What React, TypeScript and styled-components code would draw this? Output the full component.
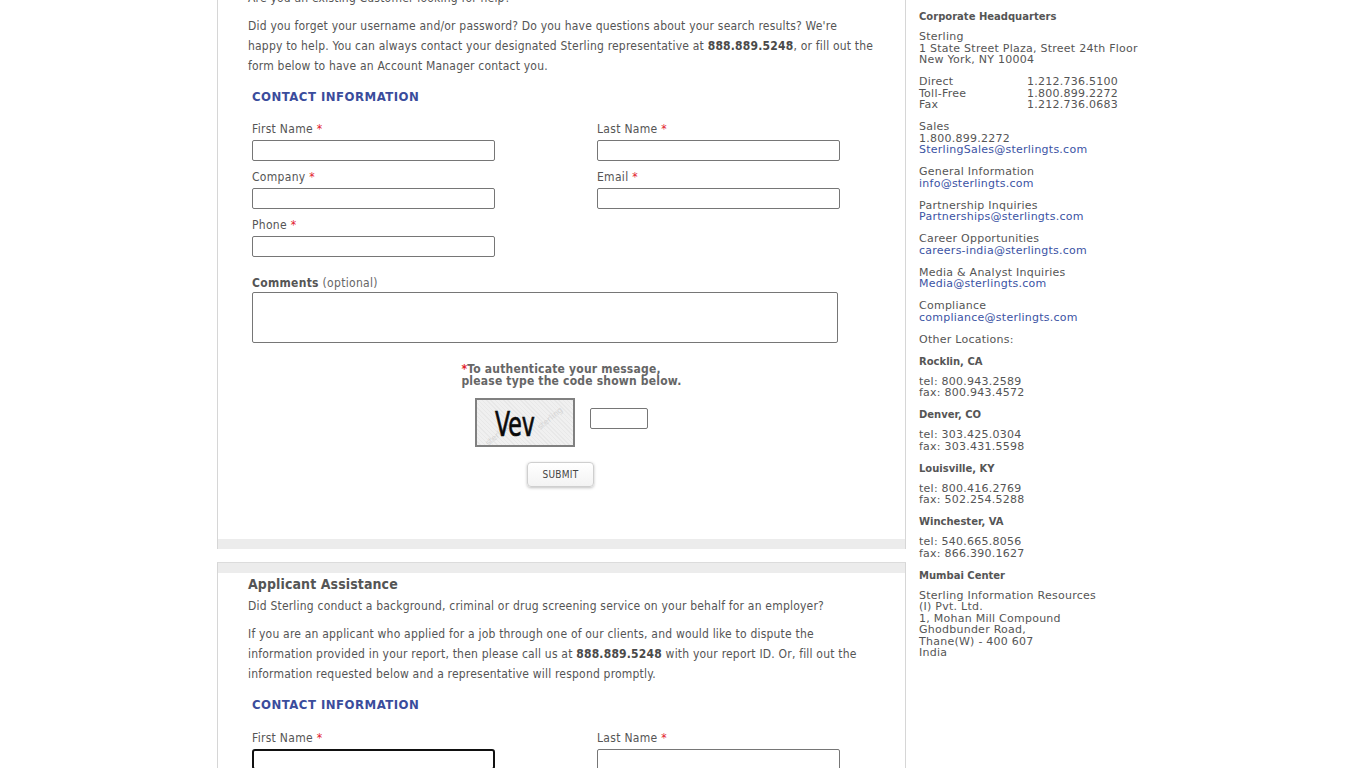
import React from "react";
import styled, { createGlobalStyle } from "styled-components";

const GlobalStyle = createGlobalStyle`
  html, body {
    margin: 0;
    padding: 0;
    background: #ffffff;
    overflow: hidden;
  }
  body {
    font-family: "DejaVu Sans Condensed", "DejaVu Sans", sans-serif;
    color: #555555;
  }
`;

interface FieldType {
  label: string;
  focused?: boolean;
}

const firstRows: FieldType[][] = [
  [{ label: "First Name" }, { label: "Last Name" }],
  [{ label: "Company" }, { label: "Email" }],
  [{ label: "Phone" }],
];

interface LocationType {
  city: string;
  lines: string[];
}

const locations: LocationType[] = [
  { city: "Rocklin, CA", lines: ["tel: 800.943.2589", "fax: 800.943.4572"] },
  { city: "Denver, CO", lines: ["tel: 303.425.0304", "fax: 303.431.5598"] },
  { city: "Louisville, KY", lines: ["tel: 800.416.2769", "fax: 502.254.5288"] },
  { city: "Winchester, VA", lines: ["tel: 540.665.8056", "fax: 866.390.1627"] },
  {
    city: "Mumbai Center",
    lines: [
      "Sterling Information Resources",
      "(I) Pvt. Ltd.",
      "1, Mohan Mill Compound",
      "Ghodbunder Road,",
      "Thane(W) - 400 607",
      "India",
    ],
  },
];

const contacts = [
  { title: "General Information", mail: "info@sterlingts.com" },
  { title: "Partnership Inquiries", mail: "Partnerships@sterlingts.com" },
  { title: "Career Opportunities", mail: "careers-india@sterlingts.com" },
  { title: "Media & Analyst Inquiries", mail: "Media@sterlingts.com" },
  { title: "Compliance", mail: "compliance@sterlingts.com" },
];

function Field({ label, focused }: FieldType) {
  return (
    <FieldBox>
      <Label>
        {label} <Req>*</Req>
      </Label>
      <TextInput $focused={focused} />
    </FieldBox>
  );
}

export default function App() {
  return (
    <>
      <GlobalStyle />
      <Page>
        <MainColumn>
          {/* 기존 고객 문의 */}
          <Panel>
            <PanelBody>
              <Para $first>Are you an existing Customer looking for help?</Para>
              <Para>
                Did you forget your username and/or password? Do you have questions about your search results? We're
                happy to help. You can always contact your designated Sterling representative at <b>888.889.5248</b>,
                or fill out the form below to have an Account Manager contact you.
              </Para>
              <FormBlock>
                <SectionTitle>CONTACT INFORMATION</SectionTitle>
                <FieldGrid>
                  {firstRows.flat().map((f) => (
                    <Field key={f.label} label={f.label} />
                  ))}
                </FieldGrid>
                <CommentLabel>
                  <b>Comments</b> (optional)
                </CommentLabel>
                <CommentBox />
                <Captcha>
                  <CaptchaText>
                    <Req>*</Req>To authenticate your message,
                    <br />
                    please type the code shown below.
                  </CaptchaText>
                  <CaptchaRow>
                    <CaptchaImage>
                      <Watermark style={{ left: 6, top: 30 }}>sterling</Watermark>
                      <Watermark style={{ left: 58, top: 14 }}>sterling</Watermark>
                      <CaptchaCode>Vev</CaptchaCode>
                    </CaptchaImage>
                    <CodeInput />
                  </CaptchaRow>
                  <SubmitButton>SUBMIT</SubmitButton>
                </Captcha>
              </FormBlock>
            </PanelBody>
            <PanelBand />
          </Panel>

          {/* 지원자 문의 */}
          <Panel $top>
            <PanelBand />
            <PanelBody>
              <PanelTitle>Applicant Assistance</PanelTitle>
              <Para>Did Sterling conduct a background, criminal or drug screening service on your behalf for an employer?</Para>
              <Para>
                If you are an applicant who applied for a job through one of our clients, and would like to dispute the
                information provided in your report, then please call us at <b>888.889.5248</b> with your report ID. Or,
                fill out the information requested below and a representative will respond promptly.
              </Para>
              <FormBlock>
                <SectionTitle $loose>CONTACT INFORMATION</SectionTitle>
                <FieldGrid>
                  <Field label="First Name" focused />
                  <Field label="Last Name" />
                </FieldGrid>
              </FormBlock>
            </PanelBody>
          </Panel>
        </MainColumn>

        <Sidebar>
          <SideHeading>Corporate Headquarters</SideHeading>
          <SideBlock>
            Sterling
            <br />1 State Street Plaza, Street 24th Floor
            <br />
            New York, NY 10004
          </SideBlock>
          <PhoneTable>
            <span>Direct</span>
            <span>1.212.736.5100</span>
            <span>Toll-Free</span>
            <span>1.800.899.2272</span>
            <span>Fax</span>
            <span>1.212.736.0683</span>
          </PhoneTable>
          <SideBlock>
            Sales
            <br />
            1.800.899.2272
            <br />
            <SideLink>SterlingSales@sterlingts.com</SideLink>
          </SideBlock>
          {contacts.map((c) => (
            <SideBlock key={c.title}>
              {c.title}
              <br />
              <SideLink>{c.mail}</SideLink>
            </SideBlock>
          ))}
          <SideBlock>Other Locations:</SideBlock>
          {locations.map((loc) => (
            <React.Fragment key={loc.city}>
              <SideHeading>{loc.city}</SideHeading>
              <SideBlock>
                {loc.lines.map((l, i) => (
                  <React.Fragment key={l}>
                    {i > 0 && <br />}
                    {l}
                  </React.Fragment>
                ))}
              </SideBlock>
            </React.Fragment>
          ))}
        </Sidebar>
      </Page>
    </>
  );
}

const Page = styled.div`
  width: 932px;
  margin: 0 auto;
  display: flex;
  align-items: flex-start;
`;

const MainColumn = styled.div`
  width: 689px;
  display: flex;
  flex-direction: column;
`;

const Panel = styled.div<{ $top?: boolean }>`
  border-left: 1px solid #d6d6d6;
  border-right: 1px solid #d6d6d6;
  border-top: ${(p) => (p.$top ? "1px solid #dcdcdc" : "none")};
  margin-top: ${(p) => (p.$top ? "13px" : "0")};
  background: #fff;
`;

const PanelBody = styled.div`
  padding: 0 30px 52px 30px;
`;

const PanelBand = styled.div`
  height: 10px;
  background: #ececec;
`;

const PanelTitle = styled.h2`
  margin: 3px 0 4px 0;
  font-size: 14px;
  line-height: 16px;
  font-weight: bold;
  color: #555;
  letter-spacing: 0.1px;
`;

const Para = styled.p<{ $first?: boolean }>`
  margin: ${(p) => (p.$first ? "-12px 0 8px" : "0 0 8px")};
  font-size: 12px;
  line-height: 20px;
  letter-spacing: 0.2px;
  color: #555;

  b {
    color: #4a4a4a;
  }
`;

const FormBlock = styled.div`
  padding: 5px 0 0 4px;
`;

const SectionTitle = styled.h3<{ $loose?: boolean }>`
  margin: 0 0 ${(p) => (p.$loose ? "17px" : "16px")} 0;
  font-size: 13px;
  line-height: 16px;
  font-weight: bold;
  letter-spacing: 0.5px;
  color: #3a4c9c;
`;

const FieldGrid = styled.div`
  display: grid;
  grid-template-columns: 243px 243px;
  column-gap: 102px;
  row-gap: 8px;
`;

const FieldBox = styled.div`
  display: flex;
  flex-direction: column;
`;

const Label = styled.label`
  font-size: 12px;
  line-height: 16px;
  letter-spacing: 0.3px;
  margin-bottom: 3px;
  color: #555;
`;

const Req = styled.span`
  color: #e2202c;
`;

const TextInput = styled.input<{ $focused?: boolean }>`
  box-sizing: border-box;
  width: 243px;
  height: 21px;
  margin: 0;
  border: ${(p) => (p.$focused ? "2px solid #111" : "1px solid #767676")};
  border-radius: ${(p) => (p.$focused ? "3px" : "2px")};
  background: #fff;
  outline: none;
`;

const CommentLabel = styled.div`
  margin-top: 18px;
  margin-bottom: 1px;
  font-size: 12px;
  line-height: 16px;
  letter-spacing: 0.3px;
  color: #666;

  b {
    color: #555;
  }
`;

const CommentBox = styled.div`
  box-sizing: border-box;
  width: 586px;
  height: 51px;
  border: 1px solid #767676;
  border-radius: 2px;
`;

const Captcha = styled.div`
  display: flex;
  flex-direction: column;
  align-items: center;
  padding-top: 20px;
  margin-left: -6px;
`;

const CaptchaText = styled.div`
  margin-left: 22px;
  font-size: 12px;
  line-height: 12px;
  font-weight: bold;
  color: #666;
  letter-spacing: 0.2px;
`;

const CaptchaRow = styled.div`
  display: flex;
  align-items: center;
  gap: 15px;
  margin-top: 11px;
  margin-left: 2px;
`;

const CaptchaImage = styled.div`
  position: relative;
  box-sizing: border-box;
  width: 100px;
  height: 49px;
  border: 2px solid #808080;
  background: repeating-linear-gradient(45deg, #f0f0f0 0 2px, #e8e8e8 2px 3px);
  display: flex;
  align-items: center;
  overflow: hidden;
`;

const Watermark = styled.span`
  position: absolute;
  font-size: 8px;
  color: #d4d4d4;
  transform: rotate(-40deg);
  font-family: "DejaVu Sans", sans-serif;
`;

const CaptchaCode = styled.span`
  position: relative;
  margin-left: 18px;
  font-family: "DejaVu Sans Condensed", sans-serif;
  font-size: 34px;
  line-height: 34px;
  color: #0a0a0a;
  -webkit-text-stroke: 0.7px #0a0a0a;
  transform: scaleX(0.72);
  transform-origin: left center;
  margin-top: 2px;
`;

const CodeInput = styled.div`
  box-sizing: border-box;
  width: 58px;
  height: 21px;
  border: 1px solid #767676;
  border-radius: 2px;
  margin-top: -8px;
`;

const SubmitButton = styled.button`
  margin-top: 15px;
  width: 67px;
  height: 25px;
  border: 1px solid #cfcfcf;
  border-radius: 4px;
  background: linear-gradient(#ffffff, #f3f3f3);
  box-shadow: 0 1px 3px rgba(0, 0, 0, 0.25);
  font-family: "DejaVu Sans Condensed", sans-serif;
  font-size: 10px;
  letter-spacing: 0.3px;
  color: #444;
  padding: 0;
`;

const Sidebar = styled.div`
  flex: 1;
  padding: 11px 0 0 13px;
  font-family: "DejaVu Sans", Verdana, sans-serif;
  font-size: 11px;
  line-height: 11.5px;
  letter-spacing: 0.25px;
  color: #555;
`;

const SideHeading = styled.div`
  font-weight: bold;
  font-size: 10px;
  line-height: 12px;
  letter-spacing: 0;
  margin-bottom: 8px;
  color: #555;
`;

const SideBlock = styled.div`
  margin-bottom: 10.5px;
`;

const PhoneTable = styled.div`
  display: grid;
  grid-template-columns: 108px auto;
  margin-bottom: 10.5px;
`;

const SideLink = styled.a`
  color: #3b53a4;
  text-decoration: none;
`;
